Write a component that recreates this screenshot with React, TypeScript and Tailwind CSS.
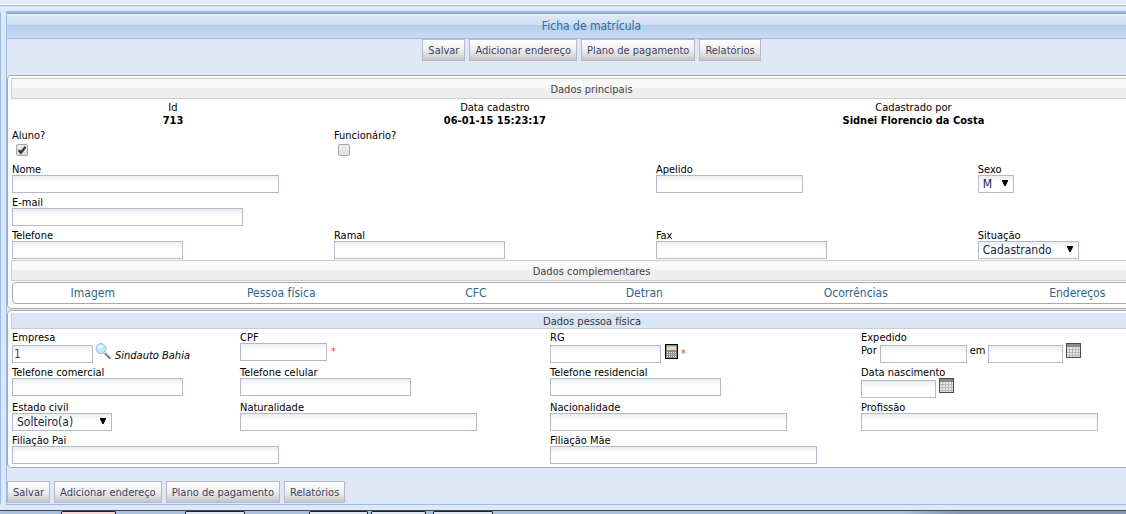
import React, { useState } from "react";

const TABS = [
  "Imagem",
  "Pessoa física",
  "CFC",
  "Detran",
  "Ocorrências",
  "Endereços",
];

const ACTIONS = [
  "Salvar",
  "Adicionar endereço",
  "Plano de pagamento",
  "Relatórios",
];

const controlClass =
  "block h-[18px] border border-[#b5b8c8] bg-linear-to-b from-[#e9eeef] to-white to-40% text-xs outline-none focus:border-[#7eadd9]";

interface TextFieldProps {
  id: string;
  label: string;
  width: string;
  className?: string;
}

const TextField: React.FC<TextFieldProps> = ({
  id,
  label,
  width,
  className = "",
}) => (
  <div className={className}>
    <label htmlFor={id} className="block h-3">
      {label}
    </label>
    <input
      id={id}
      type="text"
      className={`${controlClass} ${width} px-0.5 text-[#6a2a80]`}
    />
  </div>
);

interface SelectFieldProps {
  id: string;
  label: string;
  width: string;
  options: string[];
}

const SelectField: React.FC<SelectFieldProps> = ({
  id,
  label,
  width,
  options,
}) => (
  <div>
    <label htmlFor={id} className="block h-3">
      {label}
    </label>
    <div className={`relative ${width}`}>
      <select
        id={id}
        className={`${controlClass} w-full appearance-none pl-1 leading-4 text-[#222244]`}
      >
        {options.map((option) => (
          <option key={option}>{option}</option>
        ))}
      </select>
      <svg
        viewBox="0 0 6 6"
        className="absolute right-1.5 top-[5px] size-1.5 pointer-events-none"
      >
        <path d="M0 0h6v1L3.600 6H2.400L0 1z" fill="#000" />
      </svg>
    </div>
  </div>
);

interface CheckFieldProps {
  id: string;
  label: string;
  checked: boolean;
  onChange: (checked: boolean) => void;
}

const CheckField: React.FC<CheckFieldProps> = ({
  id,
  label,
  checked,
  onChange,
}) => (
  <div className="h-[31px]">
    <label htmlFor={id} className="block h-3">
      {label}
    </label>
    <div className="relative mt-[3px] ml-1 size-3">
      <input
        id={id}
        type="checkbox"
        checked={checked}
        onChange={(e) => onChange(e.target.checked)}
        className="block size-3 appearance-none rounded-xs border border-[#a6a6a6] bg-linear-to-b from-[#eeeeee] to-[#dcdcdc]"
      />
      {checked && (
        <svg
          viewBox="0 0 12 12"
          className="absolute inset-0 pointer-events-none"
          fill="none"
          stroke="#3c3c3c"
          strokeWidth="2.4"
        >
          <path d="M2.6 6.2 4.9 8.6 9.6 2.8" />
        </svg>
      )}
    </div>
  </div>
);

const ActionButtons: React.FC = () => (
  <div className="flex gap-1">
    {ACTIONS.map((action) => (
      <button
        key={action}
        type="button"
        className="h-[22px] whitespace-nowrap border border-[#b5b8c8] bg-linear-to-b from-white via-[#efefef] to-[#c6c6c6] px-[5px] text-[#3c3c66]"
      >
        {action}
      </button>
    ))}
  </div>
);

const SectionBar: React.FC<{ children: React.ReactNode }> = ({ children }) => (
  <h2 className="h-[21px] border border-[#cccccc] bg-linear-to-b from-[#f9f9f9] from-50% to-[#eeeeef] to-50% text-center leading-[21px] text-[#444444]">
    {children}
  </h2>
);

const SearchIcon = () => (
  <svg viewBox="0 0 17 17" className="size-[17px]">
    <path d="M10 10.2 15.6 15.6" stroke="#77797d" strokeWidth="2.4" />
    <path d="M10.4 9.6 16 15" stroke="#c9ccd1" strokeWidth="1" />
    <circle cx="6" cy="5.6" r="5" fill="#bfe6fa" stroke="#9db9d3" />
    <path d="M2.6 5.4a3.6 3.6 0 0 1 5.6-2.6C7 4.8 5 5.6 2.6 5.4z" fill="#f2fbff" />
  </svg>
);

const CalculatorIcon = () => (
  <svg viewBox="0 0 13 15" className="h-[15px] w-[13px]" shapeRendering="crispEdges">
    <rect width="13" height="15" rx="1" fill="#000" />
    <rect x="1" y="1" width="11" height="13" fill="#8b8b8b" />
    <rect x="2" y="2" width="9" height="1" fill="#c9c2b8" />
    <rect x="2" y="3" width="9" height="3" fill="#ead9c6" />
    <path
      d="M2 8.5h9M2 10.5h9M2 12.5h9"
      stroke="#e6e6e6"
      strokeDasharray="1 1"
    />
  </svg>
);

const CalendarIcon = () => (
  <svg viewBox="0 0 15 15" className="size-[15px]" shapeRendering="crispEdges">
    <rect width="15" height="15" fill="#4a4a4a" />
    <rect x="1" y="1" width="13" height="3" fill="#8a8a8a" />
    <rect x="1" y="4" width="13" height="10" fill="#e9e7e3" />
    <path
      d="M1 6.5h13M1 9.5h13M1 12.5h13M3.5 4v10M6.5 4v10M9.5 4v10M12.5 4v10"
      stroke="#bdbbb8"
    />
  </svg>
);

const Required = () => <span className="text-[#f0431e]">*</span>;

export default function App() {
  const [student, setStudent] = useState(true);
  const [employee, setEmployee] = useState(false);

  return (
    <div className="overflow-hidden bg-[#dfe8f6] font-['DejaVu_Sans_Condensed','DejaVu_Sans',sans-serif] text-[11px] leading-[13px] text-black">
      <div className="h-1.5 border-b border-[#99bbe8] bg-[#e3ebf7] shadow-[inset_0_-1px_0_#fff]" />

      <div className="flex pt-[5px] pb-[5px]">
        <div className="mt-px mb-px mr-[5px] w-px bg-[#99bbe8]" />

        {/* The form is wider than the viewport and runs off its right edge */}
        <main className="-mr-[51px] flex-1 border border-t-2 border-[#99bbe8]">
          <h1 className="h-[26px] border-t border-b border-t-[#7f9fc6] border-b-[#99bbe8] bg-[linear-gradient(#dfeaf7,#cfdff3_46%,#b3cdec_46%,#ccdcf3)] text-center text-xs leading-6 text-[#2d6c99] shadow-[inset_0_1px_0_#f4f8fd]">
            Ficha de matrícula
          </h1>

          <div className="flex h-9 justify-center">
            <ActionButtons />
          </div>

          <form onSubmit={(e) => e.preventDefault()}>
            <fieldset className="rounded border border-[#a9a9ad] bg-white px-[3px] pt-0.5 pb-1">
              <SectionBar>Dados principais</SectionBar>

              <div className="grid grid-cols-[5fr_5fr_5fr_3fr] px-px pt-0.5 text-center">
                <div>
                  Id
                  <b className="block">713</b>
                </div>
                <div>
                  Data cadastro
                  <b className="block">06-01-15 15:23:17</b>
                </div>
                <div className="col-span-2">
                  Cadastrado por
                  <b className="block">Sidnei Florencio da Costa</b>
                </div>
              </div>

              <div className="grid grid-cols-[5fr_5fr_5fr_3fr] gap-y-[3px] px-px pt-0.5 pb-px">
                <CheckField
                  id="aluno"
                  label="Aluno?"
                  checked={student}
                  onChange={setStudent}
                />
                <CheckField
                  id="funcionario"
                  label="Funcionário?"
                  checked={employee}
                  onChange={setEmployee}
                />
                <TextField
                  id="nome"
                  label="Nome"
                  width="w-[267px]"
                  className="col-span-2 col-start-1"
                />
                <TextField id="apelido" label="Apelido" width="w-[147px]" />
                <SelectField
                  id="sexo"
                  label="Sexo"
                  width="w-9"
                  options={["M", "F"]}
                />
                <TextField
                  id="email"
                  label="E-mail"
                  width="w-[231px]"
                  className="col-span-4"
                />
                <TextField id="telefone" label="Telefone" width="w-[171px]" />
                <TextField id="ramal" label="Ramal" width="w-[171px]" />
                <TextField id="fax" label="Fax" width="w-[171px]" />
                <SelectField
                  id="situacao"
                  label="Situação"
                  width="w-[101px]"
                  options={["Cadastrando", "Ativo", "Inativo"]}
                />
              </div>

              <SectionBar>Dados complementares</SectionBar>

              <nav className="mx-px mt-px grid h-[22px] grid-cols-[160fr_218fr_172fr_166fr_258fr_186fr] rounded border border-[#a9a9ad] text-center text-xs leading-[21px]">
                {TABS.map((tab) => (
                  <a key={tab} href="#" className="text-[#2d6488]">
                    {tab}
                  </a>
                ))}
              </nav>
            </fieldset>

            <fieldset className="mt-px rounded border border-[#a9a9ad] bg-white px-[3px] pt-0.5 pb-[3px]">
              <h2 className="h-4 border-b border-l border-[#cccccc] bg-[#d9e6f5] text-center leading-[17px] text-[#333333]">
                Dados pessoa física
              </h2>

              <div className="grid grid-cols-[228fr_310fr_311fr_310fr] gap-y-[3px] px-px pt-0.5">
                <div>
                  <label htmlFor="empresa" className="block h-3">
                    Empresa
                  </label>
                  <div className="flex">
                    <input
                      id="empresa"
                      type="text"
                      defaultValue="1"
                      className={`${controlClass} mt-0.5 w-[81px] px-px text-[#6a2a80]`}
                    />
                    <button
                      type="button"
                      aria-label="Buscar empresa"
                      className="mr-[3px] ml-0.5 h-[17px]"
                    >
                      <SearchIcon />
                    </button>
                    <i className="pt-1.5">Sindauto Bahia</i>
                  </div>
                </div>
                <div>
                  <label htmlFor="cpf" className="block h-3">
                    CPF
                  </label>
                  <div className="flex gap-1">
                    <input
                      id="cpf"
                      type="text"
                      className={`${controlClass} w-[87px] px-0.5`}
                    />
                    <span className="pt-0.5">
                      <Required />
                    </span>
                  </div>
                </div>
                <div>
                  <label htmlFor="rg" className="block h-3">
                    RG
                  </label>
                  <div className="flex">
                    <input
                      id="rg"
                      type="text"
                      className={`${controlClass} mt-0.5 w-[111px] px-0.5`}
                    />
                    <button
                      type="button"
                      aria-label="Calculadora"
                      className="mt-px mr-[3px] ml-1 h-[15px]"
                    >
                      <CalculatorIcon />
                    </button>
                    <span className="pt-1">
                      <Required />
                    </span>
                  </div>
                </div>
                <fieldset>
                  <legend className="h-3">Expedido</legend>
                  <div className="flex gap-[3px]">
                    <label htmlFor="expedido-por" className="pt-px">
                      Por
                    </label>
                    <input
                      id="expedido-por"
                      type="text"
                      className={`${controlClass} mt-0.5 w-[87px] px-0.5`}
                    />
                    <label htmlFor="expedido-em" className="pt-px">
                      em
                    </label>
                    <input
                      id="expedido-em"
                      type="text"
                      className={`${controlClass} mt-0.5 w-[75px] px-0.5`}
                    />
                    <button
                      type="button"
                      aria-label="Escolher data de expedição"
                      className="h-[15px]"
                    >
                      <CalendarIcon />
                    </button>
                  </div>
                </fieldset>

                <TextField
                  id="telefone-comercial"
                  label="Telefone comercial"
                  width="w-[171px]"
                />
                <TextField
                  id="telefone-celular"
                  label="Telefone celular"
                  width="w-[171px]"
                />
                <TextField
                  id="telefone-residencial"
                  label="Telefone residencial"
                  width="w-[171px]"
                />
                <div>
                  <label htmlFor="nascimento" className="block h-3">
                    Data nascimento
                  </label>
                  <div className="flex gap-[3px]">
                    <input
                      id="nascimento"
                      type="text"
                      className={`${controlClass} mt-0.5 w-[75px] px-0.5`}
                    />
                    <button
                      type="button"
                      aria-label="Escolher data de nascimento"
                      className="h-[15px]"
                    >
                      <CalendarIcon />
                    </button>
                  </div>
                </div>

                <SelectField
                  id="estado-civil"
                  label="Estado civil"
                  width="w-[100px]"
                  options={["Solteiro(a)", "Casado(a)", "Divorciado(a)"]}
                />
                <TextField
                  id="naturalidade"
                  label="Naturalidade"
                  width="w-[237px]"
                />
                <TextField
                  id="nacionalidade"
                  label="Nacionalidade"
                  width="w-[237px]"
                />
                <TextField
                  id="profissao"
                  label="Profissão"
                  width="w-[237px]"
                />

                <TextField
                  id="filiacao-pai"
                  label="Filiação Pai"
                  width="w-[267px]"
                  className="col-span-2"
                />
                <TextField
                  id="filiacao-mae"
                  label="Filiação Mãe"
                  width="w-[267px]"
                  className="col-span-2"
                />
              </div>
            </fieldset>
          </form>

          <div className="pt-[13px] pb-px">
            <ActionButtons />
          </div>
        </main>
      </div>

      {/* Top edge of the window list */}
      <footer className="flex h-1 border-t border-[#3c4a5e] bg-linear-to-r from-[#a9c0df] from-80% to-[#8497b5] to-85% pl-[61px]">
        <span className="mr-[69px] w-[55px] rounded-t-xs border-x border-t border-[#222222] bg-[#f6d6d6]" />
        <span className="mr-16 w-[60px] rounded-t-xs border-x border-t border-[#222222] bg-[#dfe6f3]" />
        <span className="mr-[3px] w-[59px] rounded-t-xs border-x border-t border-[#222222] bg-[#dfe6f3]" />
        <span className="mr-[7px] w-[55px] rounded-t-xs border-x border-t border-[#222222] bg-[#dfe6f3]" />
        <span className="w-[60px] rounded-t-xs border-x border-t border-[#222222] bg-[#dfe6f3]" />
      </footer>
    </div>
  );
}
